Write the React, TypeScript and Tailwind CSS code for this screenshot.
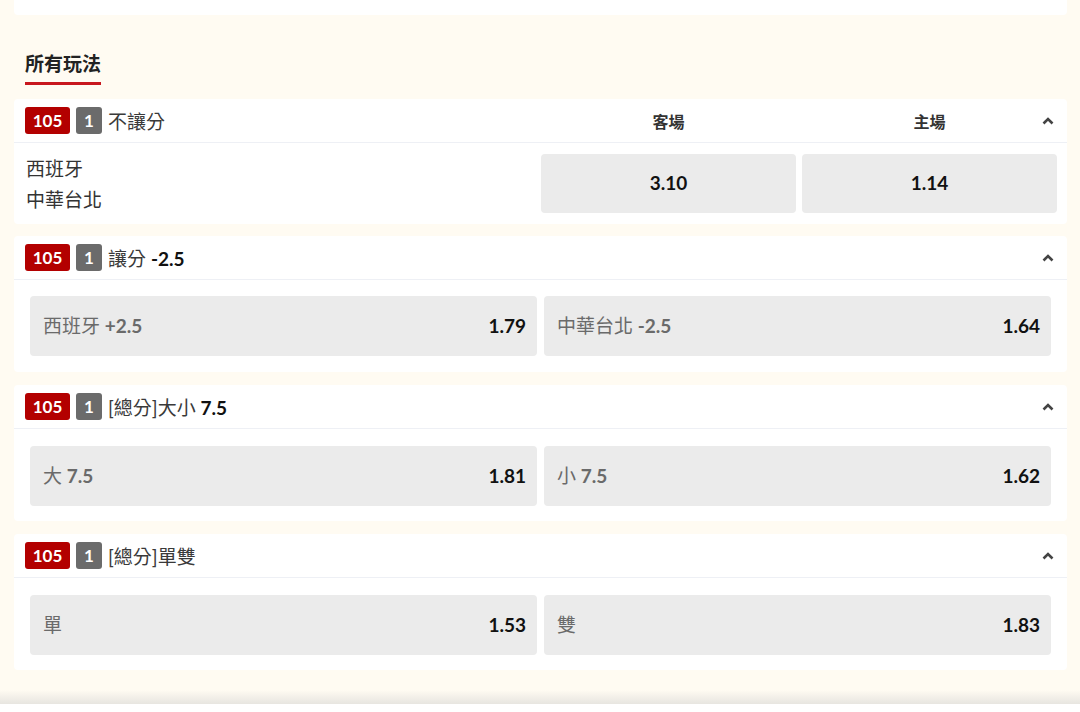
import React from "react";

const font = { fontFamily: 'Lato, "Noto Sans CJK TC", sans-serif' };

function Chevron() {
  return (
    <svg width="12" height="9" viewBox="0 0 12 9" className="absolute right-[13px] top-1/2 -translate-y-1/2">
      <polyline points="1.5,7 6,2.5 10.5,7" fill="none" stroke="#444" strokeWidth="2.6" />
    </svg>
  );
}

function Header({ title, children }: { title: React.ReactNode; children?: React.ReactNode }) {
  return (
    <div className="relative flex items-center h-[44px] border-b border-[#eef0f5] pl-[11px] pr-[10px]">
      <span className="h-[27px] w-[45px] rounded-[3px] bg-[#b30000] text-white text-[17px] font-bold flex items-center justify-center">105</span>
      <span className="ml-[6px] h-[27px] w-[26px] rounded-[3px] bg-[#6b6b6b] text-white text-[17px] font-bold flex items-center justify-center">1</span>
      <span className="ml-[6px] pt-[4px] flex-1 text-[19px] text-[#3a3a3a]">{title}</span>
      {children}
      <Chevron />
    </div>
  );
}

function OddsBtn({ label, bold, odds }: { label: string; bold?: string; odds: string }) {
  return (
    <div className="flex-1 h-[60px] rounded-[4px] bg-[#ebebeb] flex items-center justify-between pl-[13px] pr-[11px]">
      <span className="text-[19px] text-[#6a6a6a]">
        {label}
        {bold && <span className="font-bold"> {bold}</span>}
      </span>
      <span className="text-[19px] font-bold text-[#111]">{odds}</span>
    </div>
  );
}

type Pick = [string, string | undefined, string];

function Market({ title, a, b, className, body }: { title: React.ReactNode; a: Pick; b: Pick; className: string; body: string }) {
  return (
    <div className={`bg-white rounded-[4px] ${className}`}>
      <Header title={title} />
      <div className={`flex gap-[7px] px-[16px] ${body}`}>
        <OddsBtn label={a[0]} bold={a[1]} odds={a[2]} />
        <OddsBtn label={b[0]} bold={b[1]} odds={b[2]} />
      </div>
    </div>
  );
}

export default function App() {
  return (
    <div className="w-[1080px] h-[712px] overflow-hidden bg-[#fffbf2] flex flex-col" style={font}>
      <div className="pl-[14px] pr-[13px]">
        <div className="h-[15px] bg-white rounded-b-[4px]" />

        <div className="pt-[37px] pl-[11px] mb-[14px]">
          <div className="inline-block text-[19px] leading-[24px] font-bold text-[#222] pb-[6px] border-b-[3px] border-[#c8171e]">
            所有玩法
          </div>
        </div>

        {/* 不讓分 */}
        <div className="bg-white rounded-[4px]">
          <Header title="不讓分">
            <div className="flex gap-[6px] pt-[2px] text-[16px] font-bold text-[#333]">
              <span className="w-[255px] text-center">客場</span>
              <span className="w-[255px] text-center">主場</span>
            </div>
          </Header>
          <div className="flex items-center h-[81px] pl-[12px] pr-[10px]">
            <div className="flex-1 text-[19px] leading-[31px] text-[#333]">
              <div>西班牙</div>
              <div>中華台北</div>
            </div>
            <div className="flex gap-[6px]">
              <div className="w-[255px] h-[59px] rounded-[4px] bg-[#ebebeb] flex items-center justify-center text-[19px] font-bold text-[#111]">3.10</div>
              <div className="w-[255px] h-[59px] rounded-[4px] bg-[#ebebeb] flex items-center justify-center text-[19px] font-bold text-[#111]">1.14</div>
            </div>
          </div>
        </div>

        <Market
          className="mt-[12px]"
          body="pt-[16px] pb-[16px]"
          title={<>讓分 <span className="font-bold text-[#111]">-2.5</span></>}
          a={["西班牙", "+2.5", "1.79"]}
          b={["中華台北", "-2.5", "1.64"]}
        />
        <Market
          className="mt-[13px]"
          body="pt-[17px] pb-[15px]"
          title={<>[總分]大小 <span className="font-bold text-[#111]">7.5</span></>}
          a={["大", "7.5", "1.81"]}
          b={["小", "7.5", "1.62"]}
        />
        <Market
          className="mt-[13px]"
          body="pt-[17px] pb-[15px]"
          title="[總分]單雙"
          a={["單", undefined, "1.53"]}
          b={["雙", undefined, "1.83"]}
        />
      </div>

      <div className="mt-[20px] h-[14px] bg-gradient-to-b from-[#fffbf2] to-[#e7e5e0]" />
      <div className="flex-1 bg-white" />
    </div>
  );
}
